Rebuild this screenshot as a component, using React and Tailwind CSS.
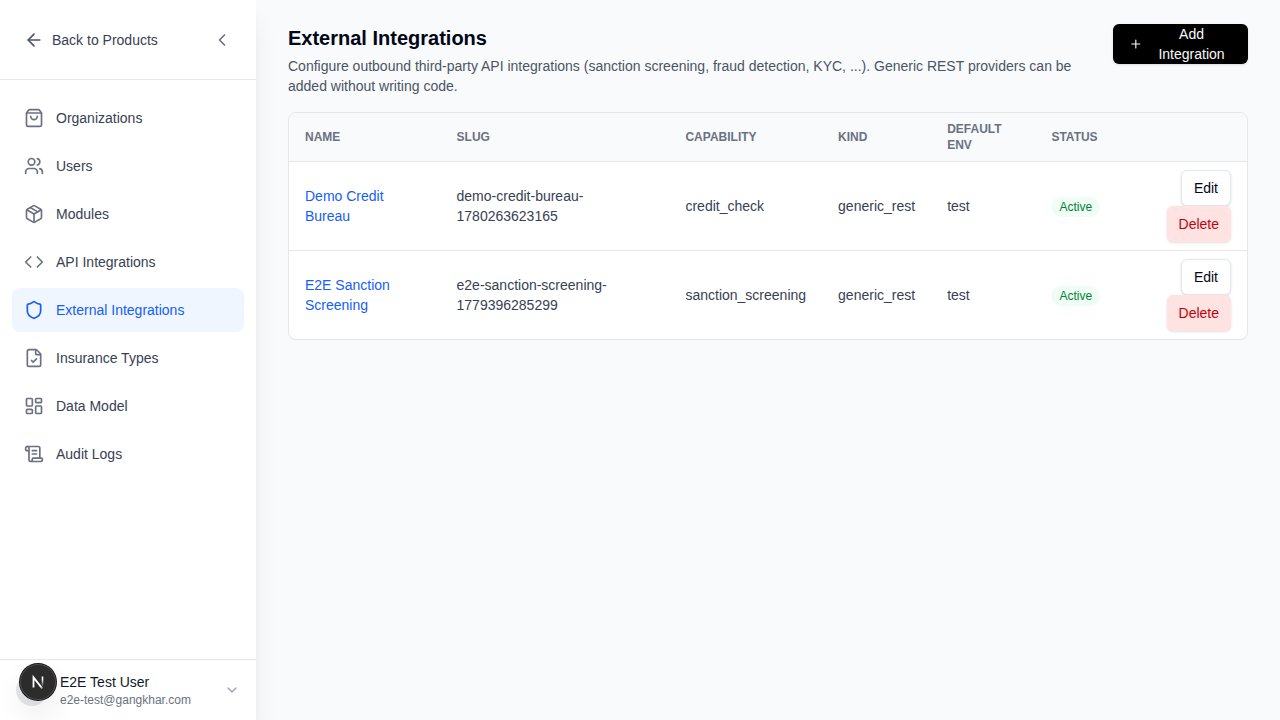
import React from 'react';
import {
  ArrowLeft,
  ChevronDown,
  ChevronLeft,
  Code,
  FileCheck,
  LayoutDashboard,
  Package,
  Plus,
  ScrollText,
  Shield,
  ShoppingBag,
  Users,
} from 'lucide-react';

const navItems = [
  { label: 'Organizations', icon: ShoppingBag },
  { label: 'Users', icon: Users },
  { label: 'Modules', icon: Package },
  { label: 'API Integrations', icon: Code },
  { label: 'External Integrations', icon: Shield, active: true },
  { label: 'Insurance Types', icon: FileCheck },
  { label: 'Data Model', icon: LayoutDashboard },
  { label: 'Audit Logs', icon: ScrollText },
];

const integrations = [
  {
    name: 'Demo Credit Bureau',
    slug: 'demo-credit-bureau-1780263623165',
    capability: 'credit_check',
    kind: 'generic_rest',
    env: 'test',
  },
  {
    name: 'E2E Sanction Screening',
    slug: 'e2e-sanction-screening-1779396285299',
    capability: 'sanction_screening',
    kind: 'generic_rest',
    env: 'test',
  },
];

function Sidebar() {
  return (
    <aside className="sticky top-0 flex h-screen w-64 shrink-0 flex-col bg-white shadow-xl">
      <div className="flex h-20 items-center justify-between border-b border-gray-200 px-6">
        <a href="#" className="flex items-center gap-2 text-gray-700">
          <ArrowLeft className="size-5 text-gray-600" />
          Back to Products
        </a>
        <button type="button" aria-label="Collapse sidebar" className="p-0 text-gray-500">
          <ChevronLeft className="size-5" />
        </button>
      </div>

      <nav className="flex flex-1 flex-col gap-1 px-3 py-4">
        {navItems.map(({ label, icon: Icon, active }) => (
          <a
            key={label}
            href="#"
            className={
              active
                ? 'flex h-11 items-center gap-3 rounded-lg bg-blue-50 px-3 text-blue-600'
                : 'flex h-11 items-center gap-3 rounded-lg px-3 text-gray-700'
            }
          >
            <Icon className={active ? 'size-5 text-blue-600' : 'size-5 text-gray-500'} />
            {label}
          </a>
        ))}
      </nav>

      <div className="relative border-t border-gray-200">
        <button type="button" className="flex w-full items-center gap-3 px-4 py-3 text-left">
          <span className="size-8 shrink-0 rounded-full bg-gray-200" />
          <span className="flex flex-1 flex-col">
            <span className="text-gray-900">E2E Test User</span>
            <span className="text-xs text-gray-500">e2e-test@gangkhar.com</span>
          </span>
          <ChevronDown className="size-4 text-gray-400" />
        </button>
        <DevBadge />
      </div>
    </aside>
  );
}

function DevBadge() {
  return (
    <button
      type="button"
      aria-label="Open dev tools"
      className="absolute top-1 left-5 flex size-9 items-center justify-center rounded-full bg-[#2c2c2c] shadow-[0_0_0_1px_#171717,inset_0_0_0_1px_#4a4a4a,0_16px_32px_-8px_rgba(0,0,0,0.24)]"
    >
      <svg width="40" height="40" viewBox="0 0 40 40" fill="none" className="shrink-0">
        <defs>
          <linearGradient id="diagonal" x1="17" y1="18" x2="25" y2="28" gradientUnits="userSpaceOnUse">
            <stop offset="0.65" stopColor="white" />
            <stop offset="1" stopColor="white" stopOpacity="0.1" />
          </linearGradient>
          <linearGradient id="stem" x1="25" y1="14" x2="25" y2="25" gradientUnits="userSpaceOnUse">
            <stop offset="0.3" stopColor="white" />
            <stop offset="1" stopColor="white" stopOpacity="0" />
          </linearGradient>
        </defs>
        <path d="M15.5 25.5V15.4L24.4 26.6" stroke="url(#diagonal)" strokeWidth="1.8" />
        <path d="M24.5 14.5V24.5" stroke="url(#stem)" strokeWidth="1.6" />
      </svg>
    </button>
  );
}

function IntegrationsTable() {
  return (
    <div className="overflow-hidden rounded-lg border border-gray-200 bg-white">
      <table className="w-full">
        <thead className="bg-gray-50 text-left text-xs text-gray-500 uppercase">
          <tr>
            <th className="px-4 py-2">Name</th>
            <th className="px-4 py-2">Slug</th>
            <th className="px-4 py-2">Capability</th>
            <th className="px-4 py-2">Kind</th>
            <th className="px-4 py-2">Default Env</th>
            <th className="px-4 py-2">Status</th>
            <th className="px-4 py-2" />
          </tr>
        </thead>
        <tbody className="text-gray-700">
          {integrations.map((item) => (
            <tr key={item.slug} className="border-t border-gray-200">
              <td className="px-4 py-2">
                <a href="#" className="text-blue-600">
                  {item.name}
                </a>
              </td>
              <td className="px-4 py-2">{item.slug}</td>
              <td className="px-4 py-2">{item.capability}</td>
              <td className="px-4 py-2">{item.kind}</td>
              <td className="px-4 py-2">{item.env}</td>
              <td className="px-4 py-2">
                <span className="inline-block rounded-full bg-green-50 px-2 py-0.5 text-xs text-green-700">Active</span>
              </td>
              <td className="px-4 py-2 text-right">
                <button
                  type="button"
                  className="inline-flex h-9 items-center rounded-md border border-slate-200 bg-white px-3 align-middle text-slate-950 shadow-sm"
                >
                  Edit
                </button>{' '}
                <button
                  type="button"
                  className="inline-flex h-9 items-center rounded-md bg-red-100 px-3 align-middle text-red-700 shadow-sm"
                >
                  Delete
                </button>
              </td>
            </tr>
          ))}
        </tbody>
      </table>
    </div>
  );
}

export default function App() {
  return (
    <div className="flex min-h-screen bg-gray-50 font-['Liberation_Sans',Arial,sans-serif] text-sm">
      <Sidebar />
      <main className="min-w-0 flex-1 px-8 py-6">
        <div className="mb-4 flex items-start justify-between">
          <div>
            <h1 className="text-xl font-bold text-slate-950">External Integrations</h1>
            <p className="mt-1 text-gray-600">
              Configure outbound third-party API integrations (sanction screening, fraud detection, KYC, ...). Generic
              REST providers can be added without writing code.
            </p>
          </div>
          <button
            type="button"
            className="flex h-10 items-center justify-center gap-2 rounded-md bg-black px-4 text-slate-50 shadow-sm"
          >
            <Plus className="size-4" />
            Add Integration
          </button>
        </div>
        <IntegrationsTable />
      </main>
    </div>
  );
}
